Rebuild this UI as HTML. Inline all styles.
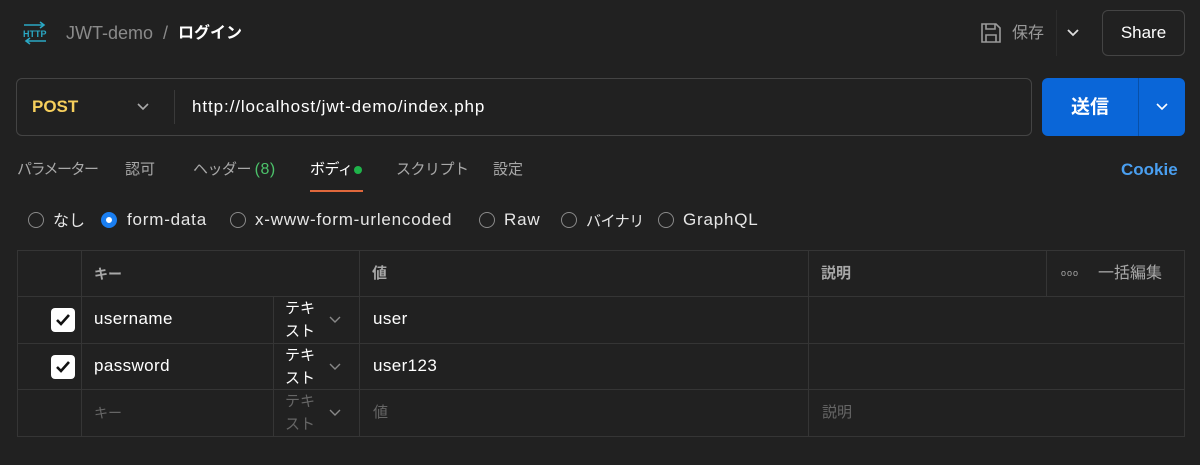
<!DOCTYPE html>
<html><head><meta charset="utf-8"><style>
*{box-sizing:border-box;margin:0;padding:0}
body{width:1200px;height:465px;background:#212121;font-family:"Liberation Sans","Noto Sans CJK JP",sans-serif;color:#e6e6e6;position:relative;overflow:hidden;font-size:16px}
.a{position:absolute;white-space:nowrap;line-height:20px}
.tab{position:absolute;top:160px;font-size:15px;line-height:20px;color:#a8a8a8;white-space:nowrap}
.rad{position:absolute;top:212px;width:16px;height:16px;border:1.5px solid #8a8a8a;border-radius:50%}
.rl{position:absolute;top:210px;font-size:17px;line-height:20px;color:#e6e6e6;white-space:nowrap;letter-spacing:0.8px}
.hl{position:absolute;background:#353535;height:1px}
.vl{position:absolute;background:#353535;width:1px}
.cb{position:absolute;left:51px;width:24px;height:24px;background:#fff;border-radius:4px}
.cb svg{position:absolute;left:3px;top:3px}
.chev{position:absolute}
.tx{position:absolute;left:285px;font-size:15px;line-height:23px;white-space:nowrap}
.v{font-size:17px;letter-spacing:0.4px}
</style></head><body>
<svg class="a" style="left:22px;top:21px" width="26" height="24" viewBox="0 0 26 24"><path d="M2 4h20M18 1l4 3-4 3" stroke="#2aa8c4" stroke-width="1.6" fill="none"/><path d="M24 20H4M8 17l-4 3 4 3" stroke="#2aa8c4" stroke-width="1.6" fill="none"/><text x="1" y="16" font-size="9" font-weight="bold" fill="#2aa8c4" font-family="Liberation Sans">HTTP</text></svg>
<div class="a" style="left:66px;top:23px;font-size:18px;color:#8a8a8a">JWT-demo&nbsp;&nbsp;/</div>
<div class="a" style="left:178px;top:24px;font-size:16px;font-weight:bold;color:#fff">ログイン</div>
<svg class="a" style="left:980px;top:22px" width="22" height="22" viewBox="0 0 22 22"><path d="M2 2h14l4 4v14H2z M6 2v5h9V2 M6 20v-7h10v7" stroke="#9a9a9a" stroke-width="1.6" fill="none"/></svg>
<div class="a" style="left:1012px;top:24px;font-size:16px;color:#9a9a9a">保存</div>
<div class="vl" style="left:1056px;top:10px;height:46px;background:#2c2c2c"></div>
<svg class="chev" style="left:1066px;top:28px" width="14" height="10"><path d="M2 2l5 5 5-5" stroke="#ddd" stroke-width="1.8" fill="none"/></svg>
<div class="a" style="left:1102px;top:10px;width:83px;height:46px;border:1px solid #444;border-radius:6px;text-align:center;line-height:44px;font-size:17px;color:#fff">Share</div>
<div class="a" style="left:16px;top:78px;width:1016px;height:58px;border:1px solid #444;border-radius:6px"></div>
<div class="a" style="left:32px;top:97px;font-size:17px;font-weight:bold;color:#f6cf5c">POST</div>
<svg class="chev" style="left:136px;top:102px" width="14" height="10"><path d="M2 2l5 5 5-5" stroke="#aaa" stroke-width="1.6" fill="none"/></svg>
<div class="vl" style="left:174px;top:90px;height:34px;background:#3a3a3a"></div>
<div class="a" style="left:192px;top:97px;font-size:17px;color:#fff;letter-spacing:0.9px">http://localhost/jwt-demo/index.php</div>
<div class="a" style="left:1042px;top:78px;width:143px;height:58px;background:#0a66d8;border-radius:6px"></div>
<div class="vl" style="left:1138px;top:78px;height:58px;background:#0850a8"></div>
<div class="a" style="left:1042px;top:98px;width:96px;text-align:center;font-size:19px;font-weight:bold;color:#fff">送信</div>
<svg class="chev" style="left:1155px;top:102px" width="14" height="10"><path d="M2 2l5 5 5-5" stroke="#fff" stroke-width="1.6" fill="none"/></svg>
<div class="tab" style="left:17px;letter-spacing:-1.5px">パラメーター</div>
<div class="tab" style="left:125px">認可</div>
<div class="tab" style="left:193px;letter-spacing:-0.5px">ヘッダー <span style="color:#4cc26a;font-size:16px;letter-spacing:0.5px">(8)</span></div>
<div class="tab" style="left:310px;color:#fff;letter-spacing:-0.5px">ボディ</div>
<div class="a" style="left:354px;top:166px;width:8px;height:8px;border-radius:50%;background:#1fb34a"></div>
<div class="a" style="left:310px;top:190px;width:53px;height:2px;background:#e0683c"></div>
<div class="tab" style="left:396px;letter-spacing:-0.5px">スクリプト</div>
<div class="tab" style="left:493px">設定</div>
<div class="a" style="left:1121px;top:160px;font-size:17px;font-weight:bold;color:#4a9ff0">Cookie</div>
<div class="rad" style="left:28px"></div><div class="rl" style="left:53px;font-size:16px;top:212px;letter-spacing:0">なし</div>
<div class="rad" style="left:101px;border:5px solid #1a7ef0;background:#fff"></div><div class="rl" style="left:127px">form-data</div>
<div class="rad" style="left:230px"></div><div class="rl" style="left:255px">x-www-form-urlencoded</div>
<div class="rad" style="left:479px"></div><div class="rl" style="left:504px">Raw</div>
<div class="rad" style="left:561px"></div><div class="rl" style="left:586px;font-size:15px;letter-spacing:-0.5px;top:212px">バイナリ</div>
<div class="rad" style="left:658px"></div><div class="rl" style="left:683px">GraphQL</div>
<div class="a" style="left:17px;top:250px;width:1168px;height:187px;border:1px solid #353535"></div>
<div class="hl" style="left:17px;top:296px;width:1168px"></div>
<div class="hl" style="left:17px;top:343px;width:1168px"></div>
<div class="hl" style="left:17px;top:389px;width:1168px"></div>
<div class="vl" style="left:81px;top:250px;height:187px"></div>
<div class="vl" style="left:273px;top:296px;height:141px"></div>
<div class="vl" style="left:359px;top:250px;height:187px"></div>
<div class="vl" style="left:808px;top:250px;height:187px"></div>
<div class="vl" style="left:1046px;top:250px;height:46px"></div>
<div class="a" style="left:94px;top:264px;font-size:14px;font-weight:bold;color:#a8a8a8">キー</div>
<div class="a" style="left:372px;top:264px;font-size:15px;font-weight:bold;color:#a8a8a8">値</div>
<div class="a" style="left:821px;top:264px;font-size:15px;font-weight:bold;color:#a8a8a8">説明</div>
<div class="a" style="left:1061px;top:263px;font-size:9px;letter-spacing:1px;color:#a8a8a8">ooo</div>
<div class="a" style="left:1098px;top:264px;font-size:16px;color:#a8a8a8">一括編集</div>
<div class="cb" style="top:308px"><svg width="18" height="18"><path d="M3 9l4 4 8-9" stroke="#111" stroke-width="2.6" fill="none"/></svg></div>
<div class="cb" style="top:355px"><svg width="18" height="18"><path d="M3 9l4 4 8-9" stroke="#111" stroke-width="2.6" fill="none"/></svg></div>
<div class="a v" style="left:94px;top:309px;color:#fff">username</div>
<div class="a v" style="left:94px;top:356px;color:#fff">password</div>
<div class="a" style="left:94px;top:403px;font-size:14px;color:#666">キー</div>
<div class="tx" style="top:297px;color:#fff">テキ<br>スト</div>
<div class="tx" style="top:344px;color:#fff">テキ<br>スト</div>
<div class="tx" style="top:390px;color:#666">テキ<br>スト</div>
<svg class="chev" style="left:328px;top:315px" width="14" height="10"><path d="M2 2l5 5 5-5" stroke="#888" stroke-width="1.4" fill="none"/></svg>
<svg class="chev" style="left:328px;top:362px" width="14" height="10"><path d="M2 2l5 5 5-5" stroke="#888" stroke-width="1.4" fill="none"/></svg>
<svg class="chev" style="left:328px;top:408px" width="14" height="10"><path d="M2 2l5 5 5-5" stroke="#888" stroke-width="1.4" fill="none"/></svg>
<div class="a v" style="left:373px;top:309px;color:#fff">user</div>
<div class="a v" style="left:373px;top:356px;color:#fff">user123</div>
<div class="a" style="left:373px;top:403px;font-size:15px;color:#666">値</div>
<div class="a" style="left:822px;top:403px;font-size:15px;color:#666">説明</div>
</body></html>
